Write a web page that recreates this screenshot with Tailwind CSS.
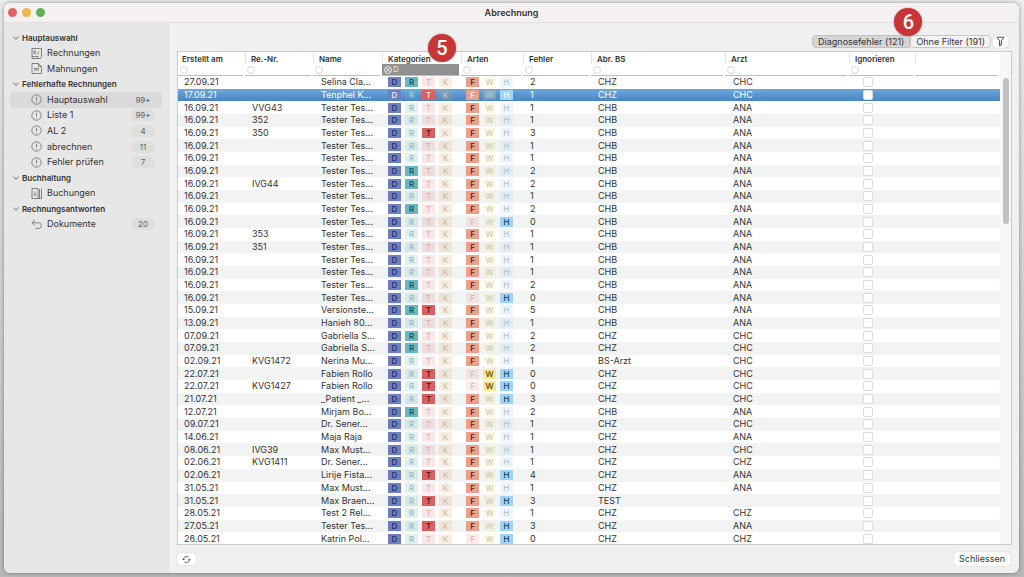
<!DOCTYPE html>
<html lang="de">
<head>
<meta charset="utf-8">
<meta name="viewport" content="width=device-width, initial-scale=1">
<title>Abrechnung</title>
<script src="https://cdn.jsdelivr.net/npm/@tailwindcss/browser@4"></script>
</head>
<body class="h-screen overflow-hidden bg-linear-to-b from-[#ececec] to-[#b9b9b9] pt-[3px] pr-[5px] pb-1 pl-1 font-['Inter','Liberation_Sans',sans-serif] text-[9px] leading-3 text-[#333]">
<div class="flex h-full flex-col overflow-hidden rounded-md bg-[#f0f0f0] shadow-[0_0_4px_rgba(0,0,0,0.4)]">

  <header class="flex h-5 shrink-0 items-center border-b border-[#e2dfe0] bg-[#f5f1f2] px-1">
    <div class="flex flex-1 gap-[5px]">
      <button type="button" aria-label="Fenster schliessen" class="size-[9px] rounded-full bg-[#dd6660]"></button>
      <button type="button" aria-label="Minimieren" class="size-[9px] rounded-full bg-[#f0b84c]"></button>
      <button type="button" aria-label="Vergrössern" class="size-[9px] rounded-full bg-[#65b057]"></button>
    </div>
    <h1 class="font-semibold">Abrechnung</h1>
    <div class="flex-1"></div>
  </header>

  <div class="flex min-h-0 flex-1">
    <nav aria-label="Bereiche" class="w-[166px] shrink-0 bg-[#e7e7e7] pt-[7px] pr-2 pl-1.5">
      <ul id="nav" class="grid h-[202px] auto-rows-fr"></ul>
    </nav>

    <main class="flex min-w-0 flex-1 flex-col px-[7px]">
      <div class="flex h-7 shrink-0 items-center justify-end pt-2 pr-1">
        <button type="button" class="h-[13px] rounded-l border border-[#c2c2c2] bg-[#d6d6d6] px-[5px] leading-[11px]">Diagnosefehler (121)</button>
        <div class="relative">
          <button type="button" class="block h-[13px] rounded border border-[#c6c6c6] bg-[#f3f3f3] px-[5px] leading-[11px]">Ohne Filter (191)</button>
          <span class="absolute -top-[27px] -left-4 flex size-7 items-center justify-center rounded-full bg-[#c93537] font-['Roboto',sans-serif] text-xl font-medium text-white shadow-[0_0_2px_rgba(0,0,0,0.4)]">6</span>
        </div>
        <button type="button" aria-label="Filter" class="ml-0.5 flex h-[13px] w-[15px] items-center justify-center rounded bg-white shadow-[0_0_1px_rgba(0,0,0,0.4)]">
          <svg class="h-[11px] w-[9px]" viewBox="0 0 9 11" fill="none" stroke="#444" stroke-linejoin="round"><path d="M.7 1.200h7.600M1.500 2.200l2.100 2.500v5.200l1.800-1V4.700l2.100-2.500"/></svg>
        </button>
      </div>

      <div class="relative flex min-h-0 flex-1">
        <div class="flex min-w-0 flex-1 overflow-hidden border border-[#cbcbcb] bg-white">
          <div class="min-w-0 flex-1">
            <table class="h-[calc(100%+1px)] w-full table-fixed border-collapse">
              <colgroup>
                <col class="w-[67px]"><col class="w-[68px]"><col class="w-[69px]"><col class="w-[79px]"><col class="w-[62px]"><col class="w-[68px]"><col class="w-[134px]"><col class="w-[124px]"><col class="w-[66px]"><col>
              </colgroup>
              <thead><tr id="head" class="h-6"></tr></thead>
              <tbody id="rows"></tbody>
            </table>
          </div>
          <div class="w-[11px] shrink-0 bg-[#f8f6f7] pt-[26px] pl-[3px]"><div class="h-[146px] w-1.5 rounded-full bg-[#c1c1c1]"></div></div>
        </div>
        <span class="absolute -top-[17px] left-[251px] flex size-7 items-center justify-center rounded-full bg-[#c93537] font-['Roboto',sans-serif] text-xl font-medium text-white shadow-[0_0_2px_rgba(0,0,0,0.4)]">5</span>
      </div>

      <footer class="flex h-7 shrink-0 items-center justify-between pr-0.5">
        <button type="button" aria-label="Aktualisieren" class="flex h-3 w-[19px] items-center justify-center rounded-[3px] bg-white shadow-[0_0_1px_rgba(0,0,0,0.35)]">
          <svg class="size-[9px]" viewBox="0 0 9 9" fill="none" stroke="#555" stroke-width=".9"><path d="M1.5 4.8A3 3 0 0 1 6.5 2.2M7.5 4.2A3 3 0 0 1 2.5 6.8M.3 3.8l1.2 1.3 1.2-1.3M6.3 5.2l1.2-1.3 1.2 1.3"/></svg>
        </button>
        <button type="button" class="h-3.5 rounded-[3px] bg-white px-[5px] shadow-[0_0_1px_rgba(0,0,0,0.35)]">Schliessen</button>
      </footer>
    </main>
  </div>
</div>

<script>
const icons = {
  bill: '<path d="M1 .5h9.500v8a2 2 0 0 1-2 2H1zM1 8.500h6v2M3 3h2.200M3 5h2.200M3 3v3M6 6.500l2-3"/>',
  page: '<path d="M1 .5h6.500l3 3v7H1zM7.500.5v3h3M3 5.500h5M3 7h5"/>',
  warn: '<circle cx="5.500" cy="5.500" r="4.700"/><path d="M5.500 2.800v3.400M5.500 7.200v1"/>',
  book: '<path d="M1 .5h6v10H1zM8.500 1v9.500M10.500.5v10M7 10.500h3.500M4 3.500v4M2.800 6.400L4 7.600l1.200-1.200"/>',
  back: '<path d="M3.800 1L1 3.800l2.800 2.800M1 3.800h6.500a2.800 2.800 0 0 1 0 5.600H4.500"/>'
};
const nav = [
  ['Hauptauswahl'], ['Rechnungen','bill'], ['Mahnungen','page'],
  ['Fehlerhafte Rechnungen'], ['Hauptauswahl','warn','99+',1], ['Liste 1','warn','99+'], ['AL 2','warn','4'], ['abrechnen','warn','11'], ['Fehler prüfen','warn','7'],
  ['Buchhaltung'], ['Buchungen','book'], ['Rechnungsantworten'], ['Dokumente','back','20']
];
document.getElementById('nav').innerHTML = nav.map(([t, i, n, sel]) => i
  ? `<li><a href="#" class="flex h-full items-center rounded pr-[7px] pl-[21px] ${sel ? 'bg-[#dadada]' : ''}">
      <svg class="mr-[5px] size-[11px]" viewBox="0 0 11 11" fill="none" stroke="#6a6a6a" stroke-width=".8">${icons[i]}</svg>
      <span class="flex-1">${t}</span>${n ? `<span class="w-6 rounded-full text-center text-[8px] text-[#606060] ${sel ? '' : 'bg-[#dededd]'}">${n}</span>` : ''}</a></li>`
  : `<li class="flex items-center pl-[3px]"><svg class="mr-[3px] size-1.5" viewBox="0 0 6 6" fill="none" stroke="#666" stroke-width=".9"><path d="M.5 1.500L3 4.300l2.500-2.800"/></svg><span class="text-[8px] font-semibold">${t}</span></li>`
).join('');

const heads = ['Erstellt am','Re.-Nr.','Name','Kategorien','Arten','Fehler','Abr. BS','Arzt','Ignorieren',''];
document.getElementById('head').innerHTML = heads.map((h, i) => {
  const on = h === 'Kategorien';
  return `<th scope="col" class="p-0 text-left align-top text-[8px] font-semibold">
    <label for="f${i}" class="block h-3 pt-px leading-3 whitespace-nowrap ${i ? 'border-l border-[#e4e4e4] pl-[5px]' : 'pl-1'}">${h}</label>
    <span class="mr-0.5 flex h-3 items-center gap-px border-b border-[#bdbdbd] pl-0.5 ${on ? 'bg-[#919191]' : 'bg-white'}">
      ${h ? `<svg class="size-2 shrink-0" viewBox="0 0 8 8" fill="none" stroke="${on ? '#fff' : '#cfcfcf'}" stroke-width=".8"><circle cx="4" cy="4" r="3.500"/>${on ? '<path d="M2 2l4 4M6 2L2 6"/>' : ''}</svg>` : ''}
      <input id="f${i}" type="text" aria-label="Filter ${h}" value="${on ? 'D' : ''}" class="w-full min-w-0 bg-transparent font-normal leading-[11px] text-[#e6e6e6] outline-none"></span></th>`;
}).join('');

const tiles = {
  D: ['bg-[#6d7fbd] text-[#1c2a63]', ''],
  R: ['bg-[#68b8bf] text-[#14464b]', 'bg-[#68b8bf]/20 text-[#8fb3b4]'],
  T: ['bg-[#dc5f5f] text-[#4a1010]', 'bg-[#dc5f5f]/15 text-[#cfb0b1]'],
  K: ['bg-[#e5a56a] text-[#5a3510]', 'bg-[#e5a56a]/20 text-[#c9b7a6]'],
  F: ['bg-[#e9a08c] text-[#54190c]', 'bg-[#e9a08c]/20 text-[#cfb6b0]'],
  W: ['bg-[#f8e98c] text-[#4a4208]', 'bg-[#f8e98c]/20 text-[#c3c2ae]'],
  H: ['bg-[#9fd3f2] text-[#123a56]', 'bg-[#9fd3f2]/20 text-[#b0bec7]']
};
const group = (letters, on, sel) => `<div class="flex h-3 items-center gap-1">` + [...letters].map(l => {
  const a = on.includes(l);
  return `<span class="h-2.5 w-[13px] text-center text-[8px] leading-[10px] ${a ? 'font-medium ' : ''}${tiles[l][a ? 0 : 1]}${sel ? (a ? ' text-white/90!' : ' text-white/50!') : ''}">${l}</span>`;
}).join('') + '</div>';

const data = `27.09.21||Selina Cla...|DR|F|2|CHZ|CHC
17.09.21||Tenphel K...|DT|FH|1|CHZ|CHC
16.09.21|VVG43|Tester Tes...|D|F|1|CHB|ANA
16.09.21|352|Tester Tes...|D|F|1|CHB|ANA
16.09.21|350|Tester Tes...|DT|F|3|CHB|ANA
16.09.21||Tester Tes...|D|F|1|CHB|ANA
16.09.21||Tester Tes...|D|F|1|CHB|ANA
16.09.21||Tester Tes...|DR|F|2|CHB|ANA
16.09.21|IVG44|Tester Tes...|DR|F|2|CHB|ANA
16.09.21||Tester Tes...|D|F|1|CHB|ANA
16.09.21||Tester Tes...|DR|F|2|CHB|ANA
16.09.21||Tester Tes...|D|H|0|CHB|ANA
16.09.21|353|Tester Tes...|D|F|1|CHB|ANA
16.09.21|351|Tester Tes...|D|F|1|CHB|ANA
16.09.21||Tester Tes...|D|F|1|CHB|ANA
16.09.21||Tester Tes...|D|F|1|CHB|ANA
16.09.21||Tester Tes...|DR|F|2|CHB|ANA
16.09.21||Tester Tes...|D|H|0|CHB|ANA
15.09.21||Versionste...|DRT|F|5|CHB|ANA
13.09.21||Hanieh 80...|D|F|1|CHB|ANA
07.09.21||Gabriella S...|DR|F|2|CHZ|CHC
07.09.21||Gabriella S...|DR|F|2|CHZ|CHC
02.09.21|KVG1472|Nerina Mu...|D|F|1|BS-Arzt|CHC
22.07.21||Fabien Rollo|DT|WH|0|CHZ|CHC
22.07.21|KVG1427|Fabien Rollo|DT|WH|0|CHZ|CHC
21.07.21||_Patient _...|DT|FH|3|CHZ|CHC
12.07.21||Mirjam Bo...|DR|F|2|CHB|ANA
09.07.21||Dr. Sener...|D|F|1|CHZ|CHC
14.06.21||Maja Raja|D|F|1|CHZ|ANA
08.06.21|IVG39|Max Must...|D|F|1|CHZ|CHC
02.06.21|KVG1411|Dr. Sener...|D|F|1|CHZ|CHZ
02.06.21||Lirije Fista...|DT|FH|4|CHZ|ANA
31.05.21||Max Must...|D|F|1|CHZ|ANA
31.05.21||Max Braen...|DT|FH|3|TEST|
28.05.21||Test 2 Rel...|D|F|1|CHZ|CHZ
27.05.21||Tester Tes...|DT|FH|3|CHZ|ANA
26.05.21||Katrin Pol...|D|H|0|CHZ|CHZ`;
document.getElementById('rows').innerHTML = data.split('\n').map((line, i) => {
  const [date, nr, name, kat, art, err, bs, arzt] = line.split('|');
  const sel = i === 1;
  const td = (t, c = 'pl-[7px]') => `<td class="p-0 whitespace-nowrap ${c}">${t}</td>`;
  return `<tr class="${sel ? 'bg-linear-to-b from-[#70a7da] to-[#4482c0] text-white' : i % 2 ? 'bg-[#f2f4f4]' : 'bg-white'}">`
    + td(date, 'pl-1.5') + td(nr) + td(name, 'pl-2')
    + td(group('DRTK', kat, sel), 'pl-1.5') + td(group('FWH', art, sel), 'pl-[5px]')
    + td(err) + td(bs) + td(arzt, 'pl-2')
    + td(`<input type="checkbox" aria-label="Ignorieren ${date} ${name}" class="block size-2.5 appearance-none rounded-[2px] border border-[#dcdcdc] bg-white">`, 'pl-3.5') + td('') + '</tr>';
}).join('');
</script>
</body>
</html>
